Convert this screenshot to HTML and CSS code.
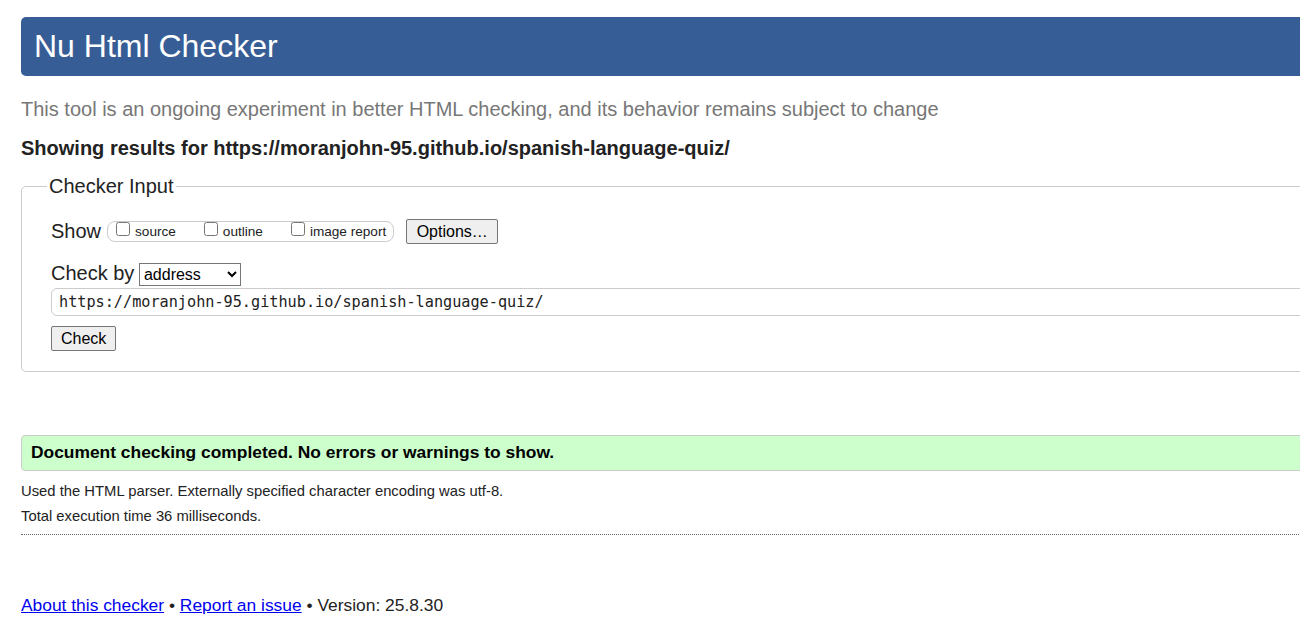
FILE: index.html
```html
<!DOCTYPE html>
<html lang="en">
<head>
<meta charset="utf-8">
<title>Showing results for https://moranjohn-95.github.io/spanish-language-quiz/ - Nu Html Checker</title>
<link rel="stylesheet" href="styles.css">
</head>
<body>
<div class="page">
  <h1 class="title">Nu Html Checker</h1>
  <p class="subtitle">This tool is an ongoing experiment in better HTML checking, and its behavior remains subject to change</p>
  <p class="showing">Showing results for https://moranjohn-95.github.io/spanish-language-quiz/</p>

  <fieldset class="input-box">
    <legend class="legend">Checker Input</legend>
    <div class="show-row">
      <span class="show-label">Show</span>
      <span class="show-group"><label class="opt"><input type="checkbox" class="cb">source</label><label class="opt"><input type="checkbox" class="cb">outline</label><label class="opt opt-last"><input type="checkbox" class="cb">image report</label></span>
      <button type="button" class="btn btn-options">Options…</button>
    </div>
    <div class="check-row">Check by <select class="select"><option>address</option><option>file upload</option><option>text input</option></select></div>
    <input type="text" class="url" value="https://moranjohn-95.github.io/spanish-language-quiz/">
    <button type="button" class="btn btn-check">Check</button>
  </fieldset>

  <div class="success">Document checking completed. No errors or warnings to show.</div>
  <p class="details">Used the HTML parser. Externally specified character encoding was utf-8.</p>
  <p class="details details-2">Total execution time 36 milliseconds.</p>
  <div class="rule"></div>

  <p class="footer"><a href="#" class="link">About this checker</a> • <a href="#" class="link">Report an issue</a> • Version: 25.8.30</p>
</div>
</body>
</html>
```

FILE: styles.css
```css
html, body {
  margin: 0;
  padding: 0;
  overflow: hidden;
  background: #fff;
}

body {
  font-family: "Liberation Sans", Arial, sans-serif;
  color: #222;
}

.page {
  width: 1400px;
  padding: 17px 0 0 21px;
}

.title {
  margin: 0;
  height: 59px;
  line-height: 59px;
  padding: 0 0 0 13px;
  font-size: 32px;
  font-weight: normal;
  color: #fff;
  background: #365d95;
  border-radius: 5px;
}

.subtitle {
  margin: 22px 0 0;
  font-size: 20px;
  line-height: 23px;
  color: #777;
}

.showing {
  margin: 16px 0 0;
  font-size: 20px;
  line-height: 23px;
  font-weight: bold;
  color: #222;
}

.input-box {
  margin: 15px 0 0;
  border: 1px solid #ccc;
  border-radius: 5px;
  padding: 21px 0 20px 29px;
  min-width: 0;
}

.legend {
  font-size: 20px;
  line-height: 23px;
  padding: 0 2px;
  margin-left: -4px;
  color: #222;
}

.show-row {
  display: flex;
  align-items: center;
  height: 25px;
}

.show-label {
  font-size: 20px;
  line-height: 23px;
  margin-right: 6px;
}

.show-group {
  display: inline-block;
  border: 1px solid #ccc;
  border-radius: 8px;
  font-size: 13.6px;
  line-height: 19px;
  white-space: nowrap;
}

.opt {
  margin-right: 20px;
}

.opt-last {
  margin-right: 7px;
}

.cb {
  width: 14px;
  height: 14px;
  margin: 0 5px 2px 8px;
  vertical-align: baseline;
}

.btn {
  font-family: "Liberation Sans", Arial, sans-serif;
  font-size: 16px;
  height: 25px;
  padding: 1px 9px;
  background: #efefef;
  color: #000;
  border: 1px solid #767676;
  border-radius: 2px;
  box-sizing: border-box;
}

.btn-options {
  margin-left: 12px;
  width: 92px;
}

.check-row {
  margin-top: 18px;
  font-size: 20px;
  line-height: 23px;
}

.select {
  font-family: "Liberation Sans", Arial, sans-serif;
  font-size: 16px;
  width: 102px;
  height: 23px;
  margin-left: -1px;
  color: #000;
  background: #fff;
  border: 1px solid #767676;
  border-radius: 0;
}

.url {
  display: block;
  box-sizing: border-box;
  width: 1300px;
  height: 28px;
  margin: 2px 0 0;
  padding: 0 7px;
  font-family: "DejaVu Sans Mono", "Liberation Mono", monospace;
  font-size: 15.2px;
  color: #222;
  border: 1px solid #ccc;
  border-radius: 6px;
  outline: none;
}

.btn-check {
  display: block;
  margin-top: 10px;
  width: 65px;
}

.success {
  margin-top: 63px;
  box-sizing: border-box;
  height: 36px;
  padding: 6px 9px 8px;
  line-height: 20px;
  font-size: 17.4px;
  font-weight: bold;
  color: #000;
  background: #ccffcc;
  border: 1px solid #ccc;
  border-radius: 4px;
}

.details {
  margin: 12px 0 0;
  font-size: 14.8px;
  line-height: 16px;
}

.details-2 {
  margin-top: 9px;
}

.rule {
  margin-top: 10px;
  border-top: 1px dotted #666;
}

.footer {
  margin: 60px 0 0;
  font-size: 17.4px;
  line-height: 20px;
  color: #222;
}

.link {
  color: #00e;
  text-decoration: underline;
}
```
